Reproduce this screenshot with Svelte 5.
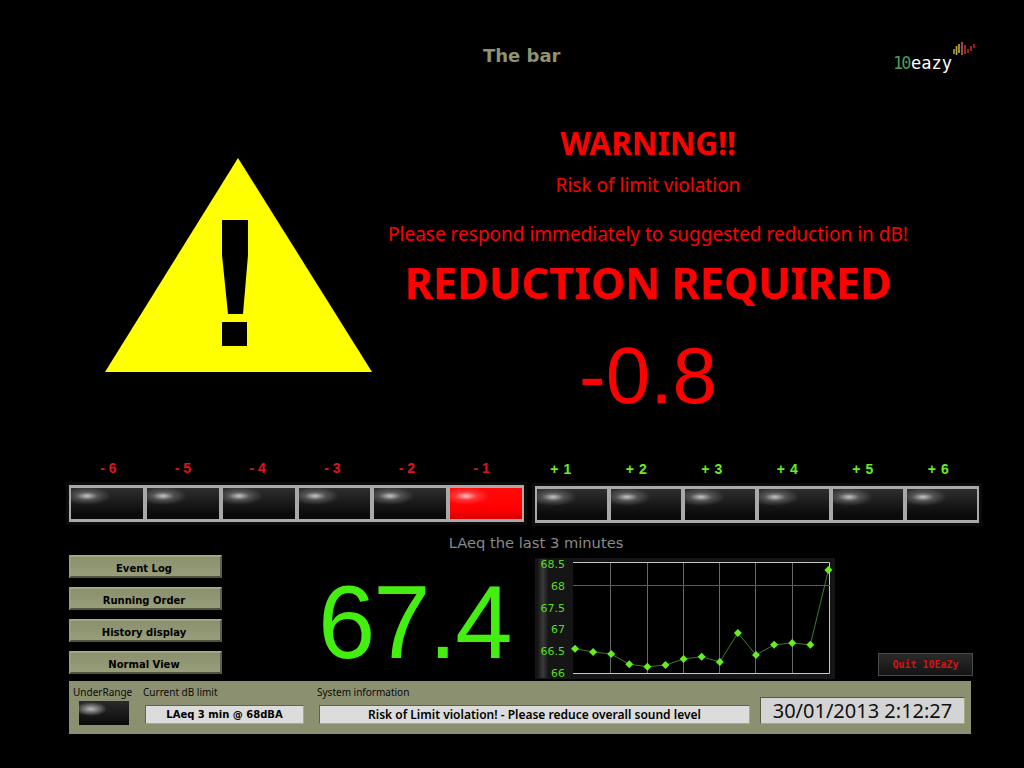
<script>
  const negLabels = ["- 6", "- 5", "- 4", "- 3", "- 2", "- 1"];
  const posLabels = ["+ 1", "+ 2", "+ 3", "+ 4", "+ 5", "+ 6"];
  const activeLight = "- 1";
  const buttons = ["Event Log", "Running Order", "History display", "Normal View"];

  // LAeq samples for the last 3 minutes
  const samples = [66.55, 66.48, 66.43, 66.2, 66.14, 66.18, 66.32, 66.37, 66.25, 66.91, 66.41, 66.64, 66.68, 66.64, 68.34];
  const ticks = [68.5, 68, 67.5, 67, 66.5, 66];
  const grid = [610, 647, 683, 719, 755, 792];

  const toY = (db) => 673 - (db - 66) * 44;
  const toX = (i) => 575 + i * 18.1;
  const points = samples.map((db, i) => ({ x: toX(i), y: toY(db) }));
  const line = points.map((p) => `${p.x},${p.y}`).join(" ");
  const bars = [
    [955, 50, 55, "#8fb04e"],
    [957.5, 47, 56, "#b8b04e"],
    [960, 45, 54, "#c8ae44"],
    [963, 43, 56, "#c0683e"],
    [966, 46, 55, "#b83a30"],
    [969, 50, 54, "#c02222"],
    [972, 47, 52, "#d02222"],
    [975, 45, 49, "#d01a1a"]
  ];
</script>

<div class="screen">
  <header class="top">
    <h1 class="site">The bar</h1>
    <div class="logo">
      <span class="ten">10</span><span class="eazy">eazy</span>
      <svg class="logo-bars" viewBox="953 42 24 16" width="24" height="16">
        {#each bars as [x, y1, y2, color]}
          <line x1={x} y1={y1} x2={x} y2={y2} stroke={color} stroke-width="1.6" />
        {/each}
      </svg>
    </div>
  </header>

  <section class="alert">
    <svg class="triangle" width="268" height="216" viewBox="105 157 268 216">
      <polygon points="238,158 372,372 105,372" fill="#ffff00" />
      <path d="M222 220 H248 V255 L243 314 H228 L222 255 Z M222 322 H247 V346 H222 Z" fill="#000" />
    </svg>
    <div class="message">
      <div class="warning">WARNING!!</div>
      <div class="risk">Risk of limit violation</div>
      <div class="respond">Please respond immediately to suggested reduction in dB!</div>
      <div class="required">REDUCTION REQUIRED</div>
      <div class="amount">-0.8</div>
    </div>
  </section>

  <section class="lights">
    <div class="group neg">
      <div class="labels">
        {#each negLabels as label}<span>{label}</span>{/each}
      </div>
      <div class="cells">
        {#each negLabels as label}
          <div class="light" class:on={label === activeLight}></div>
        {/each}
      </div>
    </div>
    <div class="group pos">
      <div class="labels">
        {#each posLabels as label}<span>{label}</span>{/each}
      </div>
      <div class="cells">
        {#each posLabels as label}
          <div class="light"></div>
        {/each}
      </div>
    </div>
  </section>

  <div class="chart-title">LAeq the last 3 minutes</div>

  <section class="lower">
    <nav class="menu">
      {#each buttons as text}
        <button class="btn">{text}</button>
      {/each}
    </nav>
    <div class="level">67.4</div>
    <svg class="chart" width="300" height="125" viewBox="535 555 300 125">
      <defs>
        <linearGradient id="strip" x1="0" x2="1" y1="0" y2="0">
          <stop offset="0" stop-color="#111" />
          <stop offset="0.5" stop-color="#3a3a3a" />
          <stop offset="1" stop-color="#111" />
        </linearGradient>
      </defs>
      <rect x="535" y="558" width="300" height="121" fill="#151515" />
      <rect x="537" y="559" width="12" height="119" fill="url(#strip)" />
      <rect x="573" y="562.5" width="257" height="111" fill="#000" />
      {#each grid as x}
        <line x1={x + 0.5} x2={x + 0.5} y1="563" y2="673" stroke="#666" />
      {/each}
      <path d="M573 562.5 H829.5 V673.5 H573" fill="none" stroke="#c8c8c8" />
      <rect x="573" y="585" width="257" height="1" fill="#ee1c1c" />
      <polyline points={line} fill="none" stroke="#3f7a2a" />
      {#each points as p}
        <path d="M{p.x} {p.y - 4} l4 4 l-4 4 l-4 -4 Z" fill="#66ee22" />
      {/each}
      {#each ticks as t, i}
        <text x="565" y={568 + i * 21.8} text-anchor="end" class="tick">{t}</text>
      {/each}
    </svg>
    <div class="quit-wrap">
      <button class="quit">Quit 10EaZy</button>
    </div>
  </section>

  <footer class="status">
    <div class="under">
      <span class="cap">UnderRange</span>
      <div class="led"></div>
    </div>
    <div class="limit">
      <span class="cap">Current dB limit</span>
      <div class="field">LAeq 3 min @ 68dBA</div>
    </div>
    <div class="info">
      <span class="cap">System information</span>
      <div class="field plain">Risk of Limit violation! - Please reduce overall sound level</div>
    </div>
    <div class="clock">30/01/2013 2:12:27</div>
  </footer>
</div>

<style>
  :global(body) {
    margin: 0;
    background: #000;
  }

  .screen {
    width: 1024px;
    height: 768px;
    overflow: hidden;
    background: #000;
    font-family: "Noto Sans", "DejaVu Sans", sans-serif;
  }

  .top {
    height: 100px;
    padding: 43px 48px 0 483px;
    box-sizing: border-box;
    display: flex;
    justify-content: space-between;
  }

  .site {
    margin: 0;
    font-family: "DejaVu Sans", sans-serif;
    font-size: 18px;
    line-height: 26px;
    font-weight: 700;
    color: #8f9470;
  }

  .logo {
    display: flex;
    align-items: flex-end;
    height: 30px;
    margin-top: -1px;
    position: relative;
    width: 83px;
    font-family: "DejaVu Sans Mono", monospace;
    line-height: 18px;
  }

  .ten {
    color: #4f9a5a;
    font-size: 17px;
    letter-spacing: -2px;
    width: 18px;
  }

  .eazy {
    color: #fff;
    font-size: 17px;
  }

  .logo-bars {
    position: absolute;
    right: 0;
    top: -1px;
  }

  .alert {
    height: 350px;
    display: flex;
  }

  .triangle {
    margin: 57px 0 0 105px;
    flex: none;
  }

  .message {
    width: 560px;
    margin-left: -5px;
    text-align: center;
    color: #ff0000;
  }

  .warning {
    margin-top: 24px;
    font-size: 31.5px;
    line-height: 38px;
    font-weight: 700;
  }

  .risk {
    margin-top: 11px;
    font-size: 19px;
    line-height: 24px;
  }

  .respond {
    margin-top: 25px;
    font-size: 19px;
    line-height: 24px;
  }

  .required {
    margin-top: 11px;
    font-size: 43.2px;
    line-height: 52px;
    font-weight: 700;
  }

  .amount {
    margin-top: 22px;
    font-family: "Liberation Sans", sans-serif;
    font-size: 80px;
    line-height: 90px;
  }

  .lights {
    display: flex;
    margin: 7px 0 0 69px;
    gap: 11px;
  }

  .labels {
    display: grid;
    grid-template-columns: repeat(6, 1fr);
    text-align: center;
    font-family: "Liberation Sans", sans-serif;
    font-size: 14px;
    line-height: 18px;
    font-weight: 700;
    height: 26px;
  }

  .neg .labels {
    color: #e0141c;
    padding: 2px 5px 0 2px;
  }

  .pos .labels {
    color: #66ee22;
    padding: 3px 3px 0 0;
    margin-left: -12px;
    word-spacing: 1px;
  }

  .cells {
    display: grid;
    grid-template-columns: repeat(6, 1fr);
    background: #0e0e0e;
    box-shadow: 0 0 0 3px #0c0c0c;
  }

  .neg .cells {
    width: 455px;
  }

  .pos .cells {
    width: 444px;
  }

  .light {
    height: 37px;
    box-sizing: border-box;
    border: 3px solid #a9a9a9;
    border-left-width: 2px;
    border-right-width: 2px;
    background:
      radial-gradient(ellipse 24px 9px at 16px 8px, rgba(225, 225, 225, 0.85), rgba(190, 190, 190, 0.3) 45%, transparent 100%),
      linear-gradient(#2e2e2e, #0a0a0a 85%);
  }

  .light.on {
    background:
      radial-gradient(ellipse 24px 9px at 16px 8px, rgba(255, 225, 225, 0.85), rgba(255, 160, 160, 0.3) 45%, transparent 100%),
      linear-gradient(#ff0a0a, #ff0000 70%, #d80000);
  }

  .chart-title {
    margin: 10px 0 0 0;
    height: 22px;
    padding-left: 48px;
    text-align: center;
    font-family: "DejaVu Sans", sans-serif;
    font-size: 14.7px;
    line-height: 19px;
    color: #8a8a8a;
  }

  .lower {
    display: grid;
    grid-template-columns: 153px 313px 300px 138px;
    padding-left: 69px;
    height: 125px;
  }

  .menu {
    display: flex;
    flex-direction: column;
    gap: 9px;
  }

  .btn {
    height: 23px;
    padding: 3px 3px 0 0;
    border: 2px solid;
    border-color: #a3a884 #5c6046 #50543c #999e7c;
    background: linear-gradient(#8a8f6d, #989d7a);
    color: #000;
    font-family: "DejaVu Sans", sans-serif;
    font-size: 10px;
    font-weight: 700;
  }

  .level {
    padding: 18px 0 0 96px;
    color: #44ee11;
    font-family: "Liberation Sans", sans-serif;
    font-size: 103px;
    letter-spacing: -2px;
    line-height: 100px;
  }

  .chart {
    display: block;
  }

  .tick {
    fill: #55dd22;
    font-family: "DejaVu Sans", sans-serif;
    font-size: 11px;
  }

  .quit-wrap {
    display: flex;
    justify-content: flex-end;
    align-items: flex-end;
    padding-bottom: 4px;
  }

  .quit {
    width: 95px;
    height: 23px;
    padding: 0;
    border: 1px solid #4a4a4a;
    background: linear-gradient(#2a2a2a, #141414);
    color: #d21414;
    font-family: "DejaVu Sans Mono", monospace;
    font-size: 10px;
    font-weight: 700;
  }

  .status {
    margin: 1px 0 0 69px;
    width: 902px;
    height: 53px;
    box-sizing: border-box;
    background: #8b9070;
    display: flex;
    align-items: flex-start;
    padding-top: 4px;
  }

  .cap {
    display: block;
    font-size: 10px;
    line-height: 15px;
    color: #0a0a0a;
  }

  .under {
    width: 70px;
    padding-left: 4px;
  }

  .led {
    width: 50px;
    height: 24px;
    margin: 1px 0 0 6px;
    background:
      radial-gradient(ellipse 16px 7px at 12px 8px, rgba(225, 225, 225, 0.8), transparent 100%),
      linear-gradient(#2a2a2a, #0a0a0a);
  }

  .limit {
    width: 176px;
  }

  .field {
    margin: 5px 0 0 2px;
    width: 159px;
    height: 19px;
    box-sizing: border-box;
    background: #dcdcdc;
    border: 1px solid;
    border-color: #5f6349 #a5aa88 #a5aa88 #5f6349;
    text-align: center;
    color: #000;
    font-family: "DejaVu Sans", sans-serif;
    font-size: 10px;
    font-weight: 700;
    line-height: 17px;
  }

  .info {
    width: 441px;
  }

  .info .cap {
    margin-left: -2px;
  }

  .field.plain {
    width: 431px;
    margin-left: 0;
    font-family: "Noto Sans", sans-serif;
    font-size: 12px;
    font-weight: 600;
  }

  .clock {
    margin-top: 12px;
    width: 205px;
    height: 27px;
    box-sizing: border-box;
    background: #d4d4d4;
    border: 1px solid;
    border-color: #55583f #a5aa88 #a5aa88 #55583f;
    text-align: center;
    color: #111;
    font-family: "Noto Sans", sans-serif;
    font-size: 20px;
    line-height: 25px;
  }
</style>
